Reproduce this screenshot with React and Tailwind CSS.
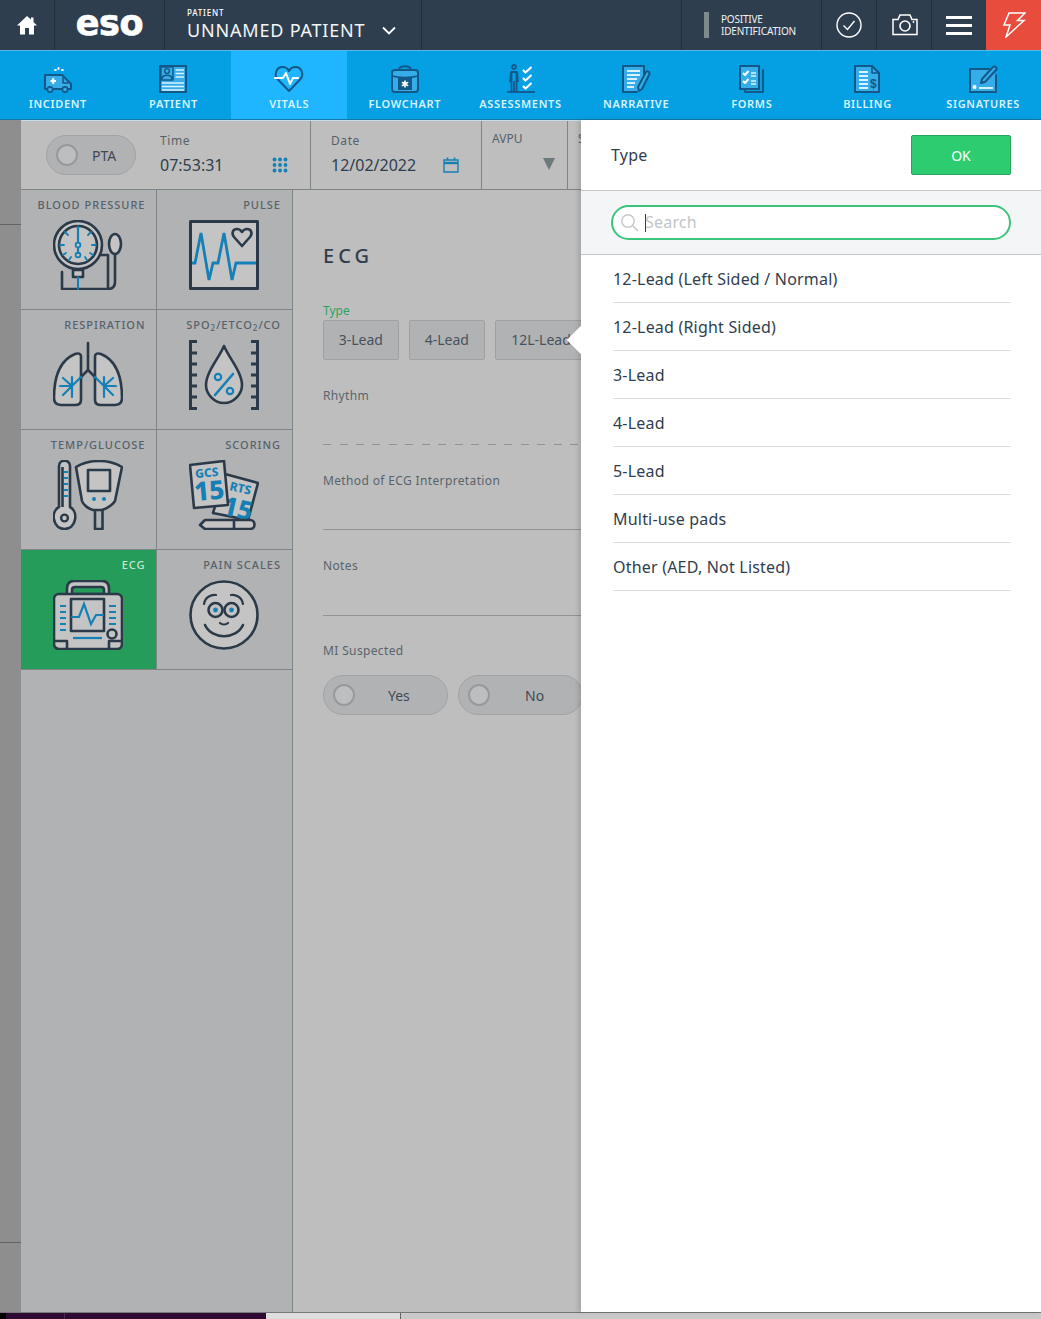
import React from "react";

const D = "#2b3a48";
const B = "#1580b5";
const N = "#12598a";
const W = "#d9f2ff";
const L = "#35ade8";

const Svg = ({ children, s = 32, v = 32, className = "" }) => (
  <svg width={s} height={s} viewBox={`0 0 ${v} ${v}`} fill="none" strokeLinecap="round" strokeLinejoin="round" className={className}>
    {children}
  </svg>
);

const Incident = () => (
  <Svg>
    <path d="M3 26V12H20L29 21V26H3Z" fill={L} stroke={N} strokeWidth="2" />
    <path d="M21 15V20H26" stroke={N} strokeWidth="1.6" />
    <circle cx="8" cy="26.5" r="2.6" fill={L} stroke={N} strokeWidth="1.6" />
    <circle cx="23" cy="26.5" r="2.6" fill={L} stroke={N} strokeWidth="1.6" />
    <path d="M8.5 18H14M11.2 15.3V20.7" stroke="#fff" strokeWidth="2.2" strokeLinecap="butt" />
    <path d="M13 7h.8M16.5 5v1M20 7h.8" stroke="#fff" strokeWidth="2" />
  </Svg>
);
const PatientI = () => (
  <Svg>
    <rect x="3" y="3" width="26" height="26" fill={L} stroke={N} strokeWidth="2" />
    <rect x="4" y="4" width="12" height="13" fill={L} stroke={N} strokeWidth="1.4" />
    <circle cx="10" cy="8" r="2.4" stroke={N} strokeWidth="1.4" />
    <path d="M5 16c0-5 10-5 10 0" stroke={N} strokeWidth="1.6" />
    <path d="M18.5 7H27M18.5 10.5H27M18.5 14H27" stroke={W} strokeWidth="1.6" strokeLinecap="butt" />
    <path d="M5 20H27M5 23.5H27M5 27H27" stroke={W} strokeWidth="1.6" strokeLinecap="butt" />
  </Svg>
);
const VitalsI = () => (
  <Svg>
    <path d="M16 28 4.5 16C1 12 3 4 9.5 4 13 4 15 6 16 8 17 6 19 4 22.5 4 29 4 31 12 27.5 16Z" stroke={N} strokeWidth="2" />
    <path d="M2 15H10L13 10 17 21 20 15H25" fill="none" stroke="#fff" strokeWidth="2" />
  </Svg>
);
const FlowI = () => (
  <Svg>
    <path d="M10 7C10 2 22 2 22 7" stroke={N} strokeWidth="2" />
    <rect x="3" y="7" width="26" height="22" rx="3" fill={L} stroke={N} strokeWidth="2" />
    <path d="M3 13C10 15 22 15 29 13" stroke={N} strokeWidth="1.6" />
    <rect x="9" y="15" width="14" height="12" fill={N} />
    <path d="M16 18v6M13.4 19.5l5.2 3M18.6 19.5l-5.2 3" stroke="#fff" strokeWidth="1.6" />
  </Svg>
);
const AssessI = () => (
  <Svg>
    <circle cx="10" cy="4" r="2" stroke={N} strokeWidth="1.8" />
    <path d="M6 19 7 9H13L14 19M7.5 9 7.5 29M12.5 9 12.5 29M10 18V29" stroke={N} strokeWidth="1.8" strokeLinecap="butt" />
    <path d="M19 7 21.5 9.5 27.5 4M19 15 21.5 17.5 27.5 12M19 23 21.5 25.5 27.5 20" stroke="#fff" strokeWidth="2.2" strokeLinecap="butt" />
    <path d="M3 29H31" stroke={N} strokeWidth="1.8" strokeLinecap="butt" />
  </Svg>
);
const NarrI = () => (
  <Svg>
    <path d="M24 11V3H3V29H17" fill={L} stroke={N} strokeWidth="2" />
    <path d="M7 8H20M7 12H20M7 16H17M7 20H15M7 24H14" stroke={W} strokeWidth="2" strokeLinecap="butt" />
    <path d="M19 28 18 24 26 9C27 7.5 30 9 29.5 11L22 26Z" fill={L} stroke={N} strokeWidth="2" />
  </Svg>
);
const FormsI = () => (
  <Svg>
    <path d="M27 7V29H9V27" stroke={N} strokeWidth="2" />
    <rect x="4" y="3" width="19" height="23" fill={L} stroke={N} strokeWidth="2" />
    <path d="M7 10 9 12 12.5 8M7 18 9 20 12.5 16" stroke="#fff" strokeWidth="2" strokeLinecap="butt" />
    <path d="M15 10H20M15 13H20M15 18H20M15 21H20" stroke={W} strokeWidth="1.6" strokeLinecap="butt" />
  </Svg>
);
const BillI = () => (
  <Svg>
    <path d="M4 3H21L28 10V29H4Z" fill={L} stroke={N} strokeWidth="2" />
    <path d="M21 3V10H28" stroke={N} strokeWidth="1.6" />
    <path d="M8 9H17M8 13H17M8 17H17M8 21H17M8 25H17" stroke={W} strokeWidth="2" strokeLinecap="butt" />
    <text x="19" y="25" fontFamily="'Liberation Sans',sans-serif" fontWeight="700" fontSize="12" fill={N}>$</text>
  </Svg>
);
const SignI = () => (
  <Svg>
    <path d="M22 6H3V29H29V12" fill={L} stroke={N} strokeWidth="2" />
    <path d="M14 20 15 16 26 4C27.5 2.5 31 5 29 7L18 19Z" fill={L} stroke={N} strokeWidth="2" />
    <path d="M6 22.5 9 25.5M9 22.5 6 25.5" stroke="#fff" strokeWidth="1.8" strokeLinecap="butt" />
    <path d="M12 25H26" stroke={W} strokeWidth="2" strokeLinecap="butt" />
  </Svg>
);

const s2 = 2.6;
const F = "#c4c4c4";
const BpI = () => (
  <Svg s={70} v={70}>
    <path d="M42 35H55V69H9V52" stroke={D} strokeWidth={s2} />
    <path d="M62 34V62C62 66 60 69 55 69" stroke={D} strokeWidth={s2} />
    <ellipse cx="62" cy="24" rx="6" ry="10" stroke={D} strokeWidth={s2} fill={F} />
    <circle cx="25" cy="25" r="24" fill={F} stroke={D} strokeWidth={s2} />
    <circle cx="25" cy="25" r="19" stroke={D} strokeWidth={s2} />
    <path d="M25 6.5V22M25 28V33" stroke={B} strokeWidth="2.2" />
    <circle cx="25" cy="25" r="2.4" stroke={B} strokeWidth="1.8" />
    <circle cx="25" cy="35" r="2.4" stroke={B} strokeWidth="1.8" />
    <path d="M12 12l3 3M38 12l-3 3M7 25h4M39 25h4M10 35l3-2M40 35l-3-2M16 40l2-3M34 40l-2-3" stroke={B} strokeWidth="1.8" />
    <rect x="20" y="50" width="10" height="7" fill={F} stroke={D} strokeWidth={s2} />
    <path d="M25 57V69" stroke={B} strokeWidth="2" />
  </Svg>
);
const PulseI = () => (
  <Svg s={70} v={70}>
    <rect x="1.5" y="1.5" width="67" height="67" fill={F} stroke={D} strokeWidth="3" />
    <path d="M3 43H6L12 13 20 60 24 43H29L35 13 43 60 47 43H67" stroke={B} strokeWidth="2.8" strokeLinecap="butt" strokeLinejoin="miter" />
    <path d="M53 26 45 17C42 13 44 9 48 9 50.5 9 52 10.5 53 12 54 10.5 55.5 9 58 9 62 9 64 13 61 17Z" fill={F} stroke={D} strokeWidth="2.6" />
  </Svg>
);
const LungI = () => (
  <Svg s={70} v={70}>
    <path d="M28 17C28 13 25 13 22 14 10 19 1 32 1 58 1 63 4 65 8 65H22C26 65 28 63 28 60Z" fill={F} stroke={D} strokeWidth={s2} />
    <path d="M42 17C42 13 45 13 48 14 60 19 69 32 69 58 69 63 66 65 62 65H48C44 65 42 63 42 60Z" fill={F} stroke={D} strokeWidth={s2} />
    <path d="M35 3V30" stroke={D} strokeWidth={s2} />
    <path d="M28 37 35 30 42 37" stroke={D} strokeWidth={s2} />
    <path d="M28 37 19 46M7 46H19M19 37V57M10 38 19 46M10 55 19 46" stroke={B} strokeWidth="2.2" />
    <path d="M42 37 51 46M63 46H51M51 37V57M60 38 51 46M60 55 51 46" stroke={B} strokeWidth="2.2" />
  </Svg>
);
const SpoI = () => (
  <Svg s={70} v={70}>
    <path d="M8 1.5H1.5V68.5H8M1.5 13H8M1.5 24H8M1.5 35H8M1.5 46H8M1.5 57H8" stroke={D} strokeWidth="3" strokeLinecap="butt" strokeLinejoin="miter" />
    <path d="M62 1.5H68.5V68.5H62M68.5 13H62M68.5 24H62M68.5 35H62M68.5 46H62M68.5 57H62" stroke={D} strokeWidth="3" strokeLinecap="butt" strokeLinejoin="miter" />
    <path d="M35 6C30 18 17 32 17 45 17 54 25 63 35 63S53 54 53 45C53 32 40 18 35 6Z" fill={F} stroke={D} strokeWidth={s2} />
    <path d="M44 34 26 55" stroke={B} strokeWidth="2.6" />
    <circle cx="29" cy="37" r="3.2" stroke={B} strokeWidth="2.2" />
    <circle cx="41" cy="51" r="3.2" stroke={B} strokeWidth="2.2" />
  </Svg>
);
const TempI = () => (
  <Svg s={70} v={70}>
    <path d="M6 47V6C6 -1 17 -1 17 6V47C26 52 23 69 11.5 69S-3 52 6 47Z" fill={F} stroke={D} strokeWidth={s2} />
    <circle cx="11.5" cy="58" r="3.4" stroke={D} strokeWidth="2.4" />
    <path d="M9.5 7V47" stroke={D} strokeWidth="2.6" strokeLinecap="butt" />
    <path d="M11 12H15M11 18H15M11 24H15M11 30H15M11 36H15" stroke={B} strokeWidth="2" strokeLinecap="butt" />
    <path d="M23 7C36 -1 56 -1 69 7L62 41C58 47 49 50 49 50H40C36 49 30 45 29 41Z" fill={F} stroke={D} strokeWidth={s2} />
    <rect x="35" y="10" width="22" height="21" fill={F} stroke={D} strokeWidth={s2} />
    <circle cx="41" cy="39" r="2" fill={B} />
    <circle cx="51" cy="39" r="2" fill={B} />
    <path d="M42 51V69H49.5V51" stroke={D} strokeWidth={s2} />
  </Svg>
);
const ScoreI = () => (
  <Svg s={70} v={70}>
    <path d="M36 14 69 23 59 60 24 53Z" fill={F} stroke={D} strokeWidth={s2} />
    <text x="40" y="30" fontFamily="'Noto Sans',sans-serif" fontWeight="800" fontSize="12" fill={B} transform="rotate(13 40 30)">RTS</text>
    <text x="32" y="54" fontFamily="'Noto Sans',sans-serif" fontWeight="800" fontSize="26" fill={B} transform="rotate(13 32 54)">15</text>
    <path d="M1 5 35 1 39 45 5 48Z" fill={F} stroke={D} strokeWidth={s2} />
    <text x="6.5" y="18" fontFamily="'Noto Sans',sans-serif" fontWeight="800" fontSize="12" fill={B} transform="rotate(-5 6.5 18)">GCS</text>
    <text x="6" y="41" fontFamily="'Noto Sans',sans-serif" fontWeight="800" fontSize="26" fill={B} transform="rotate(-5 6 41)">15</text>
    <path d="M11 65 16 60H61C67 60 67 69 61 69H16Z" fill={F} stroke={D} strokeWidth={s2} />
    <path d="M45 60V69" stroke={D} strokeWidth={s2} />
  </Svg>
);
const EcgI = () => (
  <Svg s={70} v={70}>
    <path d="M14 14V9C14 3 17 1 21 1H49C53 1 56 3 56 9V14" fill={F} stroke={D} strokeWidth={s2} />
    <path d="M19 14V10C19 8 20 7 22 7H48C50 7 51 8 51 10V14Z" fill="#259c59" stroke={D} strokeWidth={s2} />
    <rect x="1" y="14" width="68" height="55" rx="5" fill={F} stroke={D} strokeWidth={s2} />
    <rect x="18" y="19" width="33" height="32" fill={F} stroke={D} strokeWidth={s2} />
    <path d="M19 37H26L31 24 38 44 43 35H50" stroke={B} strokeWidth="2.2" strokeLinejoin="miter" />
    <path d="M7 26H13M7 32H13M7 38H13M7 44H13M7 50H13M56 26H63M56 32H63M56 38H63M56 44H63" stroke={B} strokeWidth="2.2" strokeLinecap="butt" />
    <circle cx="59" cy="54" r="4.5" fill={F} stroke={D} strokeWidth={s2} />
    <path d="M20 58H49" stroke={B} strokeWidth="2.2" strokeLinecap="butt" />
    <path d="M1 61H14V69M69 61H56V69" stroke={D} strokeWidth={s2} />
  </Svg>
);
const PainI = () => (
  <Svg s={70} v={70}>
    <circle cx="35" cy="35" r="33.5" fill={F} stroke={D} strokeWidth="2.6" />
    <circle cx="26.5" cy="30" r="7" stroke={D} strokeWidth={s2} />
    <circle cx="42.5" cy="30" r="7" stroke={D} strokeWidth={s2} />
    <circle cx="26.5" cy="30" r="2.4" fill={B} />
    <circle cx="42.5" cy="30" r="2.4" fill={B} />
    <path d="M15 24C16 17 23 14 27 15M54 24C53 17 46 14 42 15" stroke={D} strokeWidth="2.2" />
    <path d="M31 43C33 45 37 45 39 43" stroke={D} strokeWidth="2.2" />
    <path d="M16 45C23 60 47 60 54 45" stroke={D} strokeWidth={s2} />
  </Svg>
);

const nav = [
  ["INCIDENT", Incident],
  ["PATIENT", PatientI],
  ["VITALS", VitalsI, true],
  ["FLOWCHART", FlowI],
  ["ASSESSMENTS", AssessI],
  ["NARRATIVE", NarrI],
  ["FORMS", FormsI],
  ["BILLING", BillI],
  ["SIGNATURES", SignI],
];

const tiles = [
  [<>BLOOD PRESSURE</>, BpI],
  [<>PULSE</>, PulseI],
  [<>RESPIRATION</>, LungI],
  [<>SPO<sub className="text-[8px]">2</sub>/ETCO<sub className="text-[8px]">2</sub>/CO</>, SpoI],
  [<>TEMP/GLUCOSE</>, TempI],
  [<>SCORING</>, ScoreI],
  [<>ECG</>, EcgI, true],
  [<>PAIN SCALES</>, PainI],
];

const items = [
  "12-Lead (Left Sided / Normal)",
  "12-Lead (Right Sided)",
  "3-Lead",
  "4-Lead",
  "5-Lead",
  "Multi-use pads",
  "Other (AED, Not Listed)",
];

const Toggle = ({ label, w, labelCls }) => (
  <div className={`${w} h-10 shrink-0 rounded-full border border-[#a0a3a6] bg-[#b1b2b4] flex items-center pl-[9px] relative`}>
    <span className="w-[22px] h-[22px] rounded-full border-2 border-[#979a9d] bg-[#bdbebf] shrink-0" />
    <span className={`${labelCls} pt-px text-sm text-[#3f4a54]`}>{label}</span>
  </div>
);

const TopCell = ({ className = "", children }) => (
  <div className={`h-full flex items-center justify-center border-l border-[#242f3b] shrink-0 ${className}`}>{children}</div>
);

export default function App() {
  return (
    <div className="w-[1041px] h-[1319px] overflow-hidden relative flex flex-col bg-[#bebebe] font-['Noto_Sans','Open_Sans',sans-serif]">
      {/* top bar */}
      <header className="h-[50px] shrink-0 bg-[#2f3e4e] flex text-white">
        <div className="w-[54px] h-full flex items-center justify-center">
          <svg width="22" height="20" viewBox="0 0 22 20">
            <path d="M11 1 1 10.5H4V19.5H9V13H13V19.5H18V10.5H21L17.5 7V2.5H15V4.6Z" fill="#fff" />
          </svg>
        </div>
        <TopCell className="w-[110px]">
          <span className="font-['DejaVu_Sans',sans-serif] font-bold text-[35px] leading-none -mt-[3px] tracking-[-0.3px] [-webkit-text-stroke:0.7px_white]">eso</span>
        </TopCell>
        <TopCell className="w-[257px] !justify-start pl-[22px]">
          <div className="flex flex-col pt-px">
            <span className="text-[8px] leading-[10px] tracking-[0.1em] font-medium -mb-[1px]">PATIENT</span>
            <div className="flex items-center">
              <span className="text-[18px] leading-[26px] tracking-[0.045em] text-[#f2f6f9]">UNNAMED PATIENT</span>
              <svg width="14" height="9" viewBox="0 0 14 9" className="ml-[17px]" fill="none">
                <path d="M1 1.5 7 7.5 13 1.5" stroke="#fff" strokeWidth="1.8" />
              </svg>
            </div>
          </div>
        </TopCell>
        <div className="flex-1 border-l border-[#242f3b]" />
        <TopCell className="w-[140px] !justify-start pl-[22px]">
          <span className="w-[5px] h-[26px] bg-[#7f8a8c] mr-[12px]" />
          <span className="text-[10px] leading-[12px] tracking-[-0.02em] text-[#eef2f4]">POSITIVE<br />IDENTIFICATION</span>
        </TopCell>
        <TopCell className="w-[55px]">
          <svg width="26" height="26" viewBox="0 0 26 26" fill="none">
            <circle cx="13" cy="13" r="12" stroke="#fff" strokeWidth="1.4" />
            <path d="M7.5 13.5 11.5 17.5 18.5 9" stroke="#fff" strokeWidth="1.4" />
          </svg>
        </TopCell>
        <TopCell className="w-[55px] pl-px">
          <svg width="26" height="24" viewBox="0 0 26 24" fill="none">
            <path d="M1 21.5V6.5H6L8 2H18L20 6.5H25V21.5Z" stroke="#fff" strokeWidth="1.5" />
            <circle cx="13" cy="13" r="5" stroke="#fff" strokeWidth="1.6" />
            <circle cx="21.5" cy="9" r=".9" fill="#fff" />
          </svg>
        </TopCell>
        <TopCell className="w-[55px]">
          <div className="flex flex-col gap-[5px]">
            <span className="block w-[26px] h-[3px] bg-white" />
            <span className="block w-[26px] h-[3px] bg-white" />
            <span className="block w-[26px] h-[3px] bg-white" />
          </div>
        </TopCell>
        <div className="w-[55px] h-full bg-[#e74c3c] flex items-center justify-center">
          <svg width="24" height="26" viewBox="0 0 24 26" fill="none">
            <path d="M7 1H23L15.5 8.5H22L4 25 8 13H2Z" stroke="#fff" strokeWidth="1.5" strokeLinejoin="miter" />
          </svg>
        </div>
      </header>

      {/* nav */}
      <nav className="h-[70px] shrink-0 grid grid-cols-9 bg-[#059fe3] border-t border-[#55b9e6] border-b border-b-[#137aa8]">
        {nav.map(([label, Icon, active]) => (
          <div key={label} className={`flex flex-col items-center pt-[12px] ${active ? "bg-[#20b5ff]" : ""}`}>
            <Icon />
            <span className="text-[11px] leading-[14px] font-semibold tracking-[0.06em] text-[#d9f2ff] mt-[2px] whitespace-nowrap">{label}</span>
          </div>
        ))}
      </nav>

      {/* body */}
      <div className="flex-1 min-h-0 flex">
        <div className="w-[21px] shrink-0 bg-[#8e8e8e] flex flex-col">
          <div className="h-[105px] border-b border-[#5f6566] shrink-0" />
          <div className="h-[1018px] border-b border-[#5f6566] shrink-0" />
        </div>
        <main className="w-[560px] shrink-0 overflow-hidden flex flex-col">
          {/* header row */}
          <div className="h-[70px] shrink-0 flex border-b border-[#7f8586] border-t border-t-[#c5dde8]">
            <div className="w-[289px] shrink-0 flex items-start pl-[25px] pt-[14px]">
              <Toggle label="PTA" w="w-[90px]" labelCls="ml-[14px]" />
              <div className="ml-[24px] w-[128px] -mt-[2px]">
                <div className="text-xs leading-[16px] tracking-[0.05em] text-[#56626b]">Time</div>
                <div className="flex items-center justify-between mt-[4px]">
                  <span className="text-base leading-[24px] text-[#2f3e4e]">07:53:31</span>
                  <svg width="16" height="16" viewBox="0 0 16 16" fill={B}>
                    {[2.5, 8, 13.5].flatMap((y) => [2.5, 8, 13.5].map((x) => <circle key={`${x}${y}`} cx={x} cy={y} r="1.9" />))}
                  </svg>
                </div>
              </div>
            </div>
            <div className="w-[171px] shrink-0 border-l border-[#7f8586] pl-[20px] pt-[12px]">
              <div className="text-xs leading-[16px] tracking-[0.05em] text-[#56626b]">Date</div>
              <div className="flex items-center mt-[4px]">
                <span className="text-base leading-[24px] text-[#2f3e4e]">12/02/2022</span>
                <svg width="16" height="16" viewBox="0 0 16 16" fill="none" className="ml-[27px]">
                  <path d="M1 3H15V15H1Z" stroke={B} strokeWidth="1.4" />
                  <path d="M1 6H15" stroke={B} strokeWidth="2.4" />
                  <path d="M4.5 .5V3M11.5 .5V3" stroke={B} strokeWidth="1.6" />
                </svg>
              </div>
            </div>
            <div className="w-[86px] shrink-0 border-l border-[#7f8586] pl-[10px] pt-[10px] pr-[12px] flex flex-col">
              <div className="text-xs leading-[16px] text-[#56626b]">AVPU</div>
              <div className="ml-auto mt-[11px] w-0 h-0 border-l-[6px] border-r-[6px] border-t-[12px] border-l-transparent border-r-transparent border-t-[#6d7a7b]" />
            </div>
            <div className="flex-1 border-l border-[#7f8586] pl-[10px] pt-[10px] text-xs leading-[16px] text-[#56626b] overflow-hidden">S</div>
          </div>

          <div className="flex-1 min-h-0 flex">
            {/* tiles */}
            <div className="w-[272px] shrink-0 bg-[#b1b2b4] border-r border-[#7f8586]">
              <div className="grid grid-cols-2">
                {tiles.map(([label, Icon, active], i) => (
                  <div
                    key={i}
                    className={`h-[120px] flex flex-col pt-[7px] border-b border-[#7f8586] ${i % 2 === 0 ? "pr-[10px] border-r border-r-[#7f8586]" : "pr-[11px]"} ${active ? "bg-[#259c59]" : ""}`}
                  >
                    <div className={`h-[15px] text-right text-[11px] leading-[15px] font-medium tracking-[0.09em] whitespace-nowrap ${active ? "text-[#c8e6d4]" : "text-[#56626b]"}`}>{label}</div>
                    <div className={`flex justify-center mt-[8px] ${i % 2 === 0 ? "pl-[9px]" : "pl-[10px]"}`}>
                      <Icon />
                    </div>
                  </div>
                ))}
              </div>
            </div>

            {/* form */}
            <div className="flex-1 min-w-0 pl-[30px] overflow-hidden">
              <h2 className="mt-[52px] text-xl leading-[28px] font-medium tracking-[0.2em] text-[#2f3e4e]">ECG</h2>
              <div className="mt-[34px] text-xs leading-[14px] text-[#2fa35e]">Type</div>
              <div className="flex gap-[10.5px] mt-[2px] w-[400px]">
                {["3-Lead", "4-Lead", "12L-Lead"].map((b) => (
                  <div key={b} className="w-[75.5px] last:w-[92px] h-10 shrink-0 rounded-[2px] border border-[#9ea1a3] bg-[#b1b2b4] text-sm leading-[38px] text-center text-[#46525c] whitespace-nowrap">{b}</div>
                ))}
              </div>
              <div className="mt-[28px] text-xs leading-[16px] tracking-[0.03em] text-[#59646c]">Rhythm</div>
              <div className="mt-[40px] h-px bg-[repeating-linear-gradient(90deg,#8f9394_0_8px,transparent_8px_16.5px)]" />
              <div className="mt-[28px] text-xs leading-[16px] tracking-[0.03em] text-[#59646c]">Method of ECG Interpretation</div>
              <div className="mt-[40px] border-b border-[#8f9394]" />
              <div className="mt-[28px] text-xs leading-[16px] tracking-[0.03em] text-[#59646c]">Notes</div>
              <div className="mt-[41px] border-b border-[#8f9394]" />
              <div className="mt-[27px] text-xs leading-[16px] tracking-[0.03em] text-[#59646c]">MI Suspected</div>
              <div className="flex gap-[10px] mt-[16px] w-[300px]">
                <Toggle label="Yes" w="w-[125px]" labelCls="ml-[33px]" />
                <Toggle label="No" w="w-[125px]" labelCls="ml-[35px]" />
              </div>
            </div>
          </div>
        </main>
      </div>

      {/* bottom strip */}
      <div className="h-[7px] shrink-0 flex border-t border-[#777]">
        <div className="w-[6px] bg-black" />
        <div className="w-[59px] bg-[#2d0a31] border-r border-[#4a2a4e]" />
        <div className="w-[201px] bg-[#2d0a31]" />
        <div className="w-[135px] bg-[#dedede] border-r border-[#666]" />
        <div className="flex-1 bg-[#c9c9c9]" />
      </div>

      {/* popover panel */}
      <aside className="absolute left-[581px] top-[120px] w-[460px] h-[1192px] bg-white shadow-[-3px_0_4px_rgba(0,0,0,0.12)] text-[#2f3e4e]">
        <span className="absolute -left-[10px] top-[210px] w-[20px] h-[20px] rotate-45 bg-white" />
        <div className="relative h-[71px] flex items-center justify-between pl-[30px] pr-[30px] border-b border-[#c4c7ca] pb-[1px]">
          <span className="text-base tracking-[0.2px]">Type</span>
          <div className="w-[100px] h-10 rounded-[2px] bg-[#2ecc71] border border-[#27a35f] text-sm leading-[40px] text-center text-white">OK</div>
        </div>
        <div className="relative h-[64px] bg-[#f4f5f7] border-b border-[#c4c7ca] px-[30px] pt-[14px]">
          <div className="h-[35px] rounded-full border-2 border-[#3cc47c] bg-white flex items-center pl-[7px]">
            <svg width="20" height="20" viewBox="0 0 20 20" fill="none" className="shrink-0">
              <circle cx="8" cy="8" r="6.2" stroke="#c4c7ca" strokeWidth="1.4" />
              <path d="M12.5 12.5 18 18" stroke="#c4c7ca" strokeWidth="1.6" />
            </svg>
            <span className="ml-[5px] w-px h-[18px] bg-[#2f3e4e]" />
            <span className="text-base leading-[20px] tracking-[0.2px] text-[#c2c5c8] -ml-px -mt-[2px]">Search</span>
          </div>
        </div>
        <ul className="relative pl-[32px] pr-[30px]">
          {items.map((t) => (
            <li key={t} className="h-[48px] border-b border-[#dcdee0] text-base tracking-[0.2px] leading-[48px]">{t}</li>
          ))}
        </ul>
      </aside>
    </div>
  );
}
